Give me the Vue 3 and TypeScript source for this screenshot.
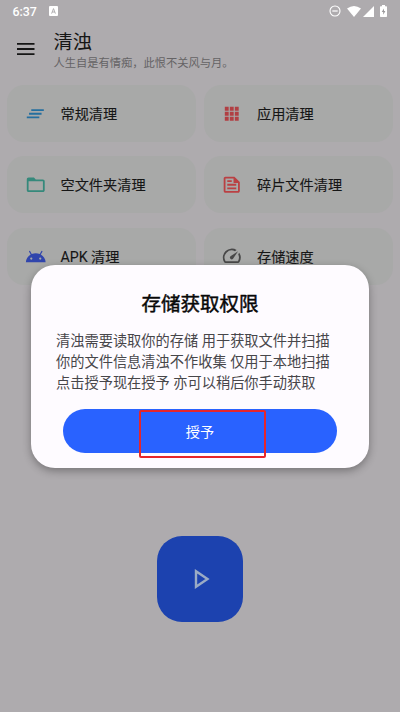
<script setup lang="ts">
type IconName = 'lines' | 'grid' | 'folder' | 'document' | 'android' | 'speed'

interface Tile {
  label: string
  icon: IconName
}

const tiles: Tile[] = [
  { label: '常规清理', icon: 'lines' },
  { label: '应用清理', icon: 'grid' },
  { label: '空文件夹清理', icon: 'folder' },
  { label: '碎片文件清理', icon: 'document' },
  { label: 'APK 清理', icon: 'android' },
  { label: '存储速度', icon: 'speed' },
]

const paths: Record<IconName, string> = {
  lines: 'M4.5 13h14v-2h-14v2zm-2.5 4h14v-2H2v2zM7 7v2h14V7H7z',
  grid: 'M3 3h5v5H3zM9.5 3h5v5h-5zM16 3h5v5h-5zM3 9.5h5v5H3zM9.5 9.5h5v5h-5zM16 9.5h5v5h-5zM3 16h5v5H3zM9.5 16h5v5h-5zM16 16h5v5h-5z',
  folder: 'M20 6h-8l-2-2H4c-1.1 0-2 .9-2 2v12c0 1.1.9 2 2 2h16c1.1 0 2-.9 2-2V8c0-1.1-.9-2-2-2zm0 12H4V8h16v10z',
  document: 'M15 3H5c-1.1 0-2 .9-2 2v14c0 1.1.9 2 2 2h14c1.1 0 2-.9 2-2V9l-6-6zM5 19V5h9v5h5v9H5zM7 7h5v2H7zM7 11h10v2H7zM7 15h10v2H7z',
  android: 'M17.6 9.48l1.84-3.18c.16-.31.04-.69-.26-.85a.637.637 0 0 0-.83.22l-1.88 3.24a11.463 11.463 0 0 0-8.94 0L5.65 5.67a.643.643 0 0 0-.87-.2c-.28.18-.37.54-.22.83L6.4 9.48A10.78 10.78 0 0 0 1 18h22a10.78 10.78 0 0 0-5.4-8.52zM7 15.25a1.25 1.25 0 1 1 0-2.5 1.25 1.25 0 0 1 0 2.5zm10 0a1.25 1.25 0 1 1 0-2.5 1.25 1.25 0 0 1 0 2.5z',
  speed: 'M20.38 8.57l-1.23 1.85a8 8 0 0 1-.22 7.58H5.07A8 8 0 0 1 15.58 6.85l1.85-1.23A10 10 0 0 0 3.35 19a2 2 0 0 0 1.72 1h13.85a2 2 0 0 0 1.74-1 10 10 0 0 0-.27-10.44zm-9.79 6.84a2 2 0 0 0 2.83 0l5.66-8.49-8.49 5.66a2 2 0 0 0 0 2.83z',
}
</script>

<template>
  <div class="screen">
    <div class="status">
      <span class="time">6:37</span>
      <svg class="badge-a" viewBox="0 0 9 10">
        <rect width="9" height="10" rx="1" fill="#fff" />
        <path d="M2.6 7.6 4.5 2.6 6.4 7.6M3.2 6h2.6" fill="none" stroke="#aaa8aa" stroke-width=".9" />
      </svg>
      <div class="status-right">
        <svg class="dnd" viewBox="0 0 12 12">
          <circle cx="6" cy="6" r="5" fill="none" stroke="#fff" stroke-width="1.1" />
          <path d="M3.3 6h5.4" stroke="#fff" stroke-width="1.2" />
        </svg>
        <svg class="wifi" viewBox="0 0 14 11"><path d="M0 2.6Q7-2.4 14 2.6L7 11z" fill="#fff" /></svg>
        <svg class="signal" viewBox="0 0 11 11"><path d="M11 0v11H0z" fill="#fff" /></svg>
        <svg class="battery" viewBox="0 0 7 12">
          <path d="M2 0h3v1.2h1.3q.7 0 .7.7v9.4q0 .7-.7.7H.7q-.7 0-.7-.7V1.9q0-.7.7-.7H2z" fill="#fff" />
          <path d="M4 3.5 1.7 7h1.5v2.8L5.4 6H4z" fill="#9b999b" />
        </svg>
      </div>
    </div>

    <header class="header">
      <svg class="menu" viewBox="0 0 18 14">
        <path d="M0 1.9h17.5M0 7h17.5M0 12.1h17.5" stroke="#161616" stroke-width="1.8" />
      </svg>
      <div class="heading">
        <h1>清浊</h1>
        <p>人生自是有情痴，此恨不关风与月。</p>
      </div>
    </header>

    <main class="tiles">
      <div v-for="tile in tiles" :key="tile.icon" class="tile">
        <svg class="tile-icon" :class="tile.icon" viewBox="0 0 24 24">
          <path :d="paths[tile.icon]" fill="currentColor" fill-rule="evenodd" />
        </svg>
        <span>{{ tile.label }}</span>
      </div>
    </main>

    <button class="play" aria-label="开始">
      <svg viewBox="0 0 16 20"><path d="M2 2.2v15.6L13.5 10z" fill="none" stroke="#9aabc5" stroke-width="2.4" /></svg>
    </button>

    <section class="dialog" role="dialog">
      <h2>存储获取权限</h2>
      <p class="message">
        <span>清浊需要读取你的存储 用于获取文件并扫描</span>
        <span>你的文件信息清浊不作收集 仅用于本地扫描</span>
        <span>点击授予现在授予 亦可以稍后你手动获取</span>
      </p>
      <button class="grant">授予</button>
      <div class="highlight"></div>
    </section>
  </div>
</template>

<style>
body {
  background: #aeabae;
}
</style>

<style scoped>
.screen {
  position: relative;
  box-sizing: border-box;
  width: 400px;
  height: 712px;
  overflow: hidden;
  background: #aeabae;
  font-family: Roboto, 'Noto Sans CJK SC', sans-serif;
  color: #161616;
}
h1,
h2,
p {
  margin: 0;
  font-weight: 400;
}
svg {
  display: block;
  flex: none;
}
button {
  border: 0;
  padding: 0;
  font-family: inherit;
}
.status {
  display: flex;
  align-items: center;
  height: 22px;
  padding: 0 13px 0 12.5px;
  color: #fff;
}
.time {
  width: 36px;
  font-size: 12.4px;
  font-weight: 500;
  line-height: 22px;
  padding-top: 1px;
}
.badge-a {
  width: 9px;
  height: 10px;
}
.status-right {
  display: flex;
  align-items: center;
  margin-left: auto;
}
.dnd {
  width: 12px;
  height: 12px;
  margin-right: 6px;
}
.wifi {
  width: 14px;
  height: 11px;
  margin-right: 2px;
}
.signal {
  width: 11px;
  height: 11px;
  margin-right: 6px;
}
.battery {
  width: 7px;
  height: 12px;
}
.header {
  display: flex;
  height: 63px;
}
.menu {
  width: 18px;
  height: 14px;
  margin: 20px 19px 0 16.5px;
}
h1 {
  height: 32px;
  margin-top: 5px;
  font-size: 19.3px;
  line-height: 32px;
}
.heading p {
  font-size: 11.25px;
  line-height: 16px;
  margin-top: -3px;
  color: #656365;
}
.tiles {
  display: grid;
  grid-template-columns: 189px 189px;
  grid-auto-rows: 57px;
  gap: 14.3px 7.5px;
  padding-left: 7.2px;
}
.tile {
  display: flex;
  align-items: center;
  gap: 14px;
  padding-left: 17.8px;
  border-radius: 17px;
  background: #a8a9a8;
  font-size: 14.2px;
  -webkit-text-stroke: 0.12px #161616;
}
.tile span {
  margin-top: -1px;
}
.tile-icon {
  width: 21.5px;
  height: 21.5px;
}
.lines {
  color: #256f9f;
}
.grid {
  color: #b13f43;
  padding: 1.5px;
  box-sizing: border-box;
}
.folder {
  color: #35897b;
}
.document {
  color: #ba4043;
}
.android {
  margin-top: 2px;
  color: #3045ac;
}
.speed {
  color: #484848;
}
.play {
  position: absolute;
  left: 157px;
  top: 535.5px;
  display: grid;
  place-items: center;
  width: 86px;
  height: 86px;
  border-radius: 25px;
  background: #1c42af;
}
.play svg {
  width: 16px;
  height: 20px;
  margin-left: 4px;
}
.dialog {
  position: absolute;
  left: 31px;
  top: 265px;
  box-sizing: border-box;
  width: 338px;
  height: 202.5px;
  padding: 23px 25px 0;
  border-radius: 24px;
  background: #fefbff;
  box-shadow: 0 3px 9px rgba(0, 0, 0, 0.32);
}
h2 {
  font-size: 19.5px;
  line-height: 34px;
  text-align: center;
  color: #080808;
  -webkit-text-stroke: 0.45px #080808;
}
.message {
  margin-top: 9.2px;
  font-size: 14.22px;
  line-height: 20.7px;
  color: #47464a;
}
.message span {
  display: block;
  white-space: nowrap;
}
.grant {
  display: block;
  width: 274px;
  height: 44.5px;
  margin: 15.6px 0 0 7px;
  border-radius: 23px;
  background: #2962ff;
  color: #fff;
  font-size: 14.2px;
}
.highlight {
  position: absolute;
  left: 107.5px;
  top: 144.8px;
  box-sizing: border-box;
  width: 127.5px;
  height: 48.5px;
  border: 2px solid #e6262b;
  border-radius: 2px;
}
</style>
